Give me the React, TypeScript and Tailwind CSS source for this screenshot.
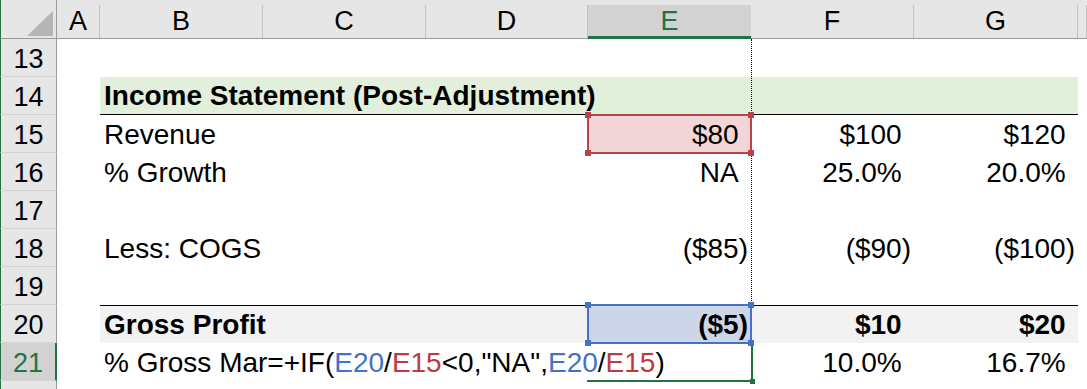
import React from "react";

const P = ({ b }: { b?: boolean }) => <span className={b ? "invisible font-bold" : "invisible"}>)</span>;

const rowHeaders = [
  { n: "13", cls: "row-start-2" },
  { n: "14", cls: "row-start-3" },
  { n: "15", cls: "row-start-4" },
  { n: "16", cls: "row-start-5" },
  { n: "17", cls: "row-start-6" },
  { n: "18", cls: "row-start-7" },
  { n: "19", cls: "row-start-8" },
  { n: "20", cls: "row-start-9" },
];

const colHeaders = [
  { l: "A", cls: "col-start-2" },
  { l: "B", cls: "col-start-3" },
  { l: "C", cls: "col-start-4" },
  { l: "D", cls: "col-start-5" },
];

const colHeaders2 = [
  { l: "F", cls: "col-start-7" },
  { l: "G", cls: "col-start-8" },
  { l: "", cls: "col-start-9" },
];

const BLUE = "text-[#4472c4]";
const RED = "text-[#be3a42]";

export default function App() {
  return (
    <div className="w-[1087px] h-[389px] overflow-hidden bg-white font-['Liberation_Sans',Arial,sans-serif] text-[28px] leading-none text-black">
      <div className="grid h-full grid-cols-[57px_43px_163px_163px_162px_163px_163px_164px_1fr] grid-rows-[39px_repeat(9,38px)_1fr]">
        {/* corner */}
        <div className="col-start-1 row-start-1 relative bg-[#e6e6e6] border-l border-l-[#217346] border-r border-r-[#9b9b9b] border-b border-b-[#9b9b9b]">
          <svg className="absolute right-[3px] bottom-[2px]" width="26" height="25" viewBox="0 0 26 25">
            <polygon points="26,0 26,25 0,25" fill="#b5b5b5" />
          </svg>
        </div>

        {/* column headers */}
        {colHeaders.map((c) => (
          <div key={c.l} className={`${c.cls} row-start-1 bg-[#e6e6e6] pt-[5px] border-b border-b-[#9b9b9b]`}>
            <div className="h-full border-r border-r-[#c2c2c2] flex items-end justify-center pb-[3px] text-[27px]">{c.l}</div>
          </div>
        ))}
        <div className="col-start-6 row-start-1 bg-[#e6e6e6] pt-[5px]">
          <div className="h-full bg-[#d2d2d2] border-b-[3px] border-b-[#217346] flex items-end justify-center pb-[1px] text-[27px] text-[#217346]">E</div>
        </div>
        {colHeaders2.map((c) => (
          <div key={c.cls} className={`${c.cls} row-start-1 bg-[#e6e6e6] pt-[5px] border-b border-b-[#9b9b9b]`}>
            <div className="h-full border-r border-r-[#c2c2c2] flex items-end justify-center pb-[3px] text-[27px]">{c.l}</div>
          </div>
        ))}

        {/* row headers */}
        {rowHeaders.map((r) => (
          <div
            key={r.n}
            className={`col-start-1 ${r.cls} bg-[#e6e6e6] border-l border-l-[#217346] border-r border-r-[#9b9b9b] border-b border-b-[#d4d4d4] flex items-end justify-center pb-[3px] text-[27px]`}
          >
            {r.n}
          </div>
        ))}
        <div className="col-start-1 row-start-10 bg-[#d2d2d2] border-l border-l-[#217346] border-r-2 border-r-[#217346] border-b border-b-[#d4d4d4] flex items-end justify-center pb-[3px] text-[27px] text-[#217346]">
          21
        </div>
        <div className="col-start-1 row-start-11 bg-[#e6e6e6] border-l border-l-[#217346] border-r border-r-[#9b9b9b]" />

        {/* row 14 band */}
        <div className="col-start-3 col-span-6 row-start-3 bg-[#e2efda] border-b border-b-black flex items-end pl-[4px] pb-[4px] font-bold whitespace-nowrap">
          Income Statement (Post-Adjustment)
        </div>

        {/* row 20 band */}
        <div className="col-start-3 col-span-6 row-start-9 bg-[#f2f2f2] border-t border-t-black" />

        {/* page break dotted line */}
        <div className="col-start-7 row-start-2 row-span-7 justify-self-start w-0 border-l border-dotted border-l-black" />

        {/* row 15 */}
        <div className="col-start-3 row-start-4 flex items-end pl-[4px] pb-[4px] whitespace-nowrap">Revenue</div>
        <div className="col-start-6 row-start-4 relative bg-[#f2d5d7] flex items-end justify-end pr-[3px] pb-[4px]">
          <span>$80<P /></span>
          <div className="absolute -left-px -right-px -top-px -bottom-px border-2 border-[#b8434b]" />
          <div className="absolute -left-[3px] -top-[3px] w-[6px] h-[6px] bg-[#b8434b]" />
          <div className="absolute -right-[3px] -top-[3px] w-[6px] h-[6px] bg-[#b8434b]" />
          <div className="absolute -left-[3px] -bottom-[3px] w-[6px] h-[6px] bg-[#b8434b]" />
          <div className="absolute -right-[3px] -bottom-[3px] w-[6px] h-[6px] bg-[#b8434b]" />
        </div>
        <div className="col-start-7 row-start-4 flex items-end justify-end pr-[3px] pb-[4px]"><span>$100<P /></span></div>
        <div className="col-start-8 row-start-4 flex items-end justify-end pr-[3px] pb-[4px]"><span>$120<P /></span></div>

        {/* row 16 */}
        <div className="col-start-3 row-start-5 flex items-end pl-[4px] pb-[4px] whitespace-nowrap">% Growth</div>
        <div className="col-start-6 row-start-5 flex items-end justify-end pr-[3px] pb-[4px]"><span>NA<P /></span></div>
        <div className="col-start-7 row-start-5 flex items-end justify-end pr-[3px] pb-[4px]"><span>25.0%<P /></span></div>
        <div className="col-start-8 row-start-5 flex items-end justify-end pr-[3px] pb-[4px]"><span>20.0%<P /></span></div>

        {/* row 18 */}
        <div className="col-start-3 row-start-7 flex items-end pl-[4px] pb-[4px] whitespace-nowrap">Less: COGS</div>
        <div className="col-start-6 row-start-7 flex items-end justify-end pr-[3px] pb-[4px]">($85)</div>
        <div className="col-start-7 row-start-7 flex items-end justify-end pr-[3px] pb-[4px]">($90)</div>
        <div className="col-start-8 row-start-7 flex items-end justify-end pr-[3px] pb-[4px]">($100)</div>

        {/* row 20 */}
        <div className="col-start-3 row-start-9 flex items-end pl-[4px] pb-[4px] font-bold whitespace-nowrap">Gross Profit</div>
        <div className="col-start-7 row-start-9 flex items-end justify-end pr-[3px] pb-[4px] font-bold"><span>$10<P b /></span></div>
        <div className="col-start-8 row-start-9 flex items-end justify-end pr-[3px] pb-[4px] font-bold"><span>$20<P b /></span></div>

        {/* row 21 */}
        <div className="col-start-3 col-span-4 row-start-10 flex items-end pl-[4px] pb-[4px] whitespace-nowrap">
          <span>
            % Gross Mar=+IF(<span className={BLUE}>E20</span>/<span className={RED}>E15</span>&lt;0,"NA",<span className={BLUE}>E20</span>/<span className={RED}>E15</span>)
          </span>
        </div>
        <div className="col-start-7 row-start-10 flex items-end justify-end pr-[3px] pb-[4px]"><span>10.0%<P /></span></div>
        <div className="col-start-8 row-start-10 flex items-end justify-end pr-[3px] pb-[4px]"><span>16.7%<P /></span></div>

        {/* E21 active cell (editing) */}
        <div className="col-start-6 row-start-10 relative">
          <div className="absolute -left-px -right-[2px] top-0 -bottom-px border-r-2 border-b-2 border-[#217346]" />
          <div className="absolute -right-[4px] -bottom-[3px] w-[5px] h-[5px] bg-[#217346]" />
        </div>

        {/* E20 reference */}
        <div className="col-start-6 row-start-9 relative bg-[#cdd6e9] flex items-end justify-end pr-[3px] pb-[4px] font-bold">
          ($5)
          <div className="absolute -left-px -right-px -top-px -bottom-px border-2 border-[#4472c4]" />
          <div className="absolute -left-[3px] -top-[3px] w-[6px] h-[6px] bg-[#4472c4]" />
          <div className="absolute -right-[3px] -top-[3px] w-[6px] h-[6px] bg-[#4472c4]" />
          <div className="absolute -left-[3px] -bottom-[3px] w-[6px] h-[6px] bg-[#4472c4]" />
          <div className="absolute -right-[3px] -bottom-[3px] w-[6px] h-[6px] bg-[#4472c4]" />
        </div>
      </div>
    </div>
  );
}
